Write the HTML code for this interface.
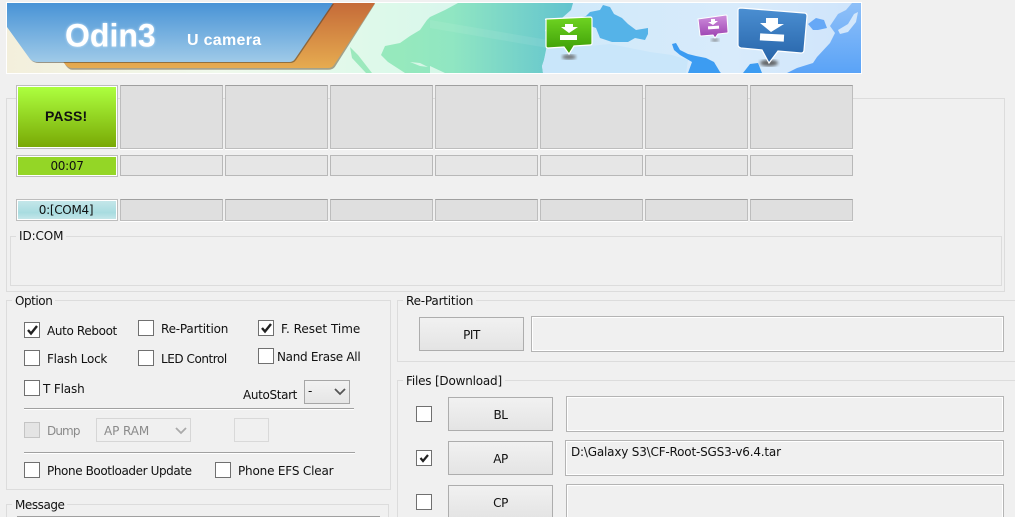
<!DOCTYPE html>
<html><head><meta charset="utf-8"><style>
html,body{margin:0;padding:0;background:#f0f0f0;width:1015px;height:517px;overflow:hidden}
body{position:relative;font:12px/14px "DejaVu Sans","Liberation Sans",sans-serif;color:#111;letter-spacing:-.45px}
div,span{position:absolute;box-sizing:border-box}
.t{white-space:nowrap}
.box{border:1px solid #dcdcdc}
.lab{background:#f0f0f0;padding:0 3px;white-space:nowrap}
.c{background:#dfdfdf;border:1px solid #bdbdbd;border-top:1px solid #9f9f9f;box-shadow:0 1px 0 #fff}
.m{background:#e6e6e6;border:1px solid #b8b8b8}
.cb{width:16px;height:16px;background:#fff;border:1px solid #707070}
.cb svg{position:absolute;left:0;top:0}
.btn{border:1px solid #adadad;background:linear-gradient(#f1f1f1,#e4e4e4);text-align:center}
.f{border:1px solid #b4b4b4;box-shadow:inset 0 0 0 1px #fff;background:#f0f0f0}
.hr{height:1px;background:#a0a0a0;box-shadow:0 1px 0 #fff}
</style></head><body>

<svg style="position:absolute;left:0;top:0" width="1015" height="80" viewBox="0 0 1015 80">
<defs>
<linearGradient id="bg" gradientUnits="userSpaceOnUse" x1="7" x2="861" y1="0" y2="0">
<stop offset="0" stop-color="#f3efdc"/><stop offset=".25" stop-color="#f0f9ec"/><stop offset=".45" stop-color="#dcf9ea"/><stop offset=".58" stop-color="#d8f3ee"/><stop offset=".66" stop-color="#d0e9fa"/><stop offset=".85" stop-color="#d8ebfb"/><stop offset="1" stop-color="#cfe4fb"/>
</linearGradient>
<linearGradient id="blue" x1="0" x2="0" y1="0" y2="1"><stop offset="0" stop-color="#4893d6"/><stop offset="1" stop-color="#9fcae8"/></linearGradient>
<linearGradient id="or" x1="0" x2="0" y1="0" y2="1"><stop offset="0" stop-color="#c56a38"/><stop offset="1" stop-color="#e6ab50"/></linearGradient>
<linearGradient id="sea" gradientUnits="userSpaceOnUse" x1="400" x2="573" y1="0" y2="0"><stop offset="0" stop-color="#96e9bd"/><stop offset=".3" stop-color="#90e6c2"/><stop offset="1" stop-color="#62c3cf"/></linearGradient>
<linearGradient id="gr" x1="0" x2="0" y1="0" y2="1"><stop offset="0" stop-color="#6fd422"/><stop offset="1" stop-color="#3a9a05"/></linearGradient>
<linearGradient id="pu" x1="0" x2="0" y1="0" y2="1"><stop offset="0" stop-color="#cf8fdc"/><stop offset="1" stop-color="#9a3fb0"/></linearGradient>
<linearGradient id="bl" x1="0" x2="0" y1="0" y2="1"><stop offset="0" stop-color="#4b8fd2"/><stop offset="1" stop-color="#2663a8"/></linearGradient>
<linearGradient id="as" gradientUnits="userSpaceOnUse" x1="861" x2="861" y1="3" y2="73"><stop offset="0" stop-color="#8fc0f8"/><stop offset="1" stop-color="#5aa3f7"/></linearGradient>
<filter id="b"><feGaussianBlur stdDeviation="1.5"/></filter>
<filter id="gl"><feGaussianBlur stdDeviation="1.4"/></filter>
</defs>
<rect x="6" y="2" width="856" height="72" fill="#fff"/>
<rect x="7" y="3" width="854" height="70" fill="url(#bg)"/>
<!-- americas + atlantic -->
<path d="M350 47 L358 55 L372 73 L366 73 L352 58Z" fill="#9ce9bd"/>
<path d="M458 3 H573 L571 10 L562 18 L555 25 L545 30 L548 40 L546 50 L544 60 L542 66 L543 73 H405 L388 62 L381 55 L385 46 L400 43 L410 36 L420 30 L427 20 L430 17 L445 10Z" fill="url(#sea)"/>
<path d="M410 62 L420 63 L428 67 L420 66Z" fill="#d6f6e6"/>
<path d="M430 66 L445 73 H430Z" fill="#d7f7e8"/>
<path d="M430 20 L560 42 L560 50 L430 28Z" fill="#fff" opacity=".08"/>
<!-- africa -->
<path d="M543 73 L542 66 L544 60 L547 48 L575 46 L590 46 L610 44 L650 52 L672 55 L688 60 L686 73Z" fill="#c9e6fa"/>
<!-- mediterranean -->
<path d="M578 18 L586 16 L590 12 L600 10 L603 5 L610 7 L614 14 L622 18 L628 24 L636 30 L648 28 L648 34 L645 40 L635 38 L628 42 L612 42 L600 38 L596 28 L588 25 L580 24Z" fill="#55b3e8"/>
<!-- arabia / india -->
<path d="M672 44 L676 43 L680 50 L688 54 L696 56 L706 58 L714 62 L720 72 L721 73 L688 73 L692 62 L680 55 L674 50Z" fill="#3c9cf2"/>
<path d="M743 73 L750 64 L758 63 L762 73Z" fill="#3c9cf2"/>
<!-- east asia -->
<path d="M861 3 V73 H787 L797 68 L813 63 L817 57 L830 43 L835 33 L830 26 L838 14 L846 10 L852 3Z" fill="url(#as)"/>
<path d="M813 30 L808 24 L816 18 L824 20 L827 28 L818 30Z" fill="#66a8f6"/>
<path d="M838 30 L848 24 L854 14 L858 12 L856 22 L848 32 L840 34Z" fill="#d3e7fb"/>
<!-- orange band -->
<path d="M64 62 L333 3 H375 L335 66 Q333 69 328 69 H72 Q68 69 64 62Z" fill="#6e5a3a" opacity=".55" transform="translate(0 .7)"/>
<path d="M60 58 L333 3 H375 L334 65 Q332 68 328 68 H72 Q68 68 65 64Z" fill="url(#or)"/>
<!-- blue band -->
<path d="M7 3 H333 L295 59 Q293 62 289 62 H38 Q33 62 30 59 L7 27Z" fill="#3f3a30" opacity=".5" transform="translate(1 1)"/>
<path d="M7 3 H333 L295 59 Q293 62 289 62 H38 Q33 62 30 59 L7 27Z" fill="url(#blue)"/>
<text x="65" y="46.5" font-family="Liberation Sans" font-weight="bold" font-size="32" fill="#cfe6fa" filter="url(#gl)" letter-spacing="0">Odin3</text>
<text x="65" y="46.5" font-family="Liberation Sans" font-weight="bold" font-size="32" fill="#fff" letter-spacing="0">Odin3</text>
<text x="187" y="45" font-family="Liberation Sans" font-weight="bold" font-size="16" fill="#fff" letter-spacing=".3">U camera</text>
<!-- green pin -->
<ellipse cx="569" cy="57" rx="7" ry="2.5" fill="#666" filter="url(#b)" opacity=".9"/>
<path d="M546 20 Q545 19 546 19 L590 17 Q592 17 592 19 L592 43 Q592 45 590 45 L574 46 L569 54 L564 47 L548 48 Q546 48 546 46Z" fill="url(#gr)" stroke="#fff" stroke-width="1.2"/>
<path d="M565 24 H573 V27 H578 L569 33 L561 27 H565Z" fill="#fff"/><rect x="560" y="35" width="17" height="5" fill="#fff"/>
<!-- purple pin -->
<ellipse cx="715" cy="40" rx="4" ry="1.6" fill="#666" filter="url(#b)" opacity=".8"/>
<path d="M698 19 L726 15 Q727 15 727 16 L728 32 Q728 33 727 33 L718 34 L715 38 L713 35 L701 36 Q700 36 700 35Z" fill="url(#pu)" stroke="#fff"/>
<path d="M711 19 H715 V21 H718 L713 25 L708 22 H711Z" fill="#fff"/><rect x="708" y="26" width="11" height="3" fill="#fff" transform="rotate(-4 713 27)"/>
<!-- blue pin -->
<ellipse cx="769" cy="63" rx="9" ry="3.2" fill="#555" filter="url(#b)" opacity=".9"/>
<path d="M741 8 L804 13 Q807 13 807 16 L804 50 Q804 53 801 53 L778 51 L769 63 L762 50 L741 48 Q738 47 738 45 L738 10 Q738 8 741 8Z" fill="url(#bl)" stroke="#fff" stroke-width="1.2"/>
<path d="M766 18 H778 V24 H784 L771 32 L760 23 H766Z" fill="#fff"/><rect x="760" y="34" width="24" height="7" fill="#fff" transform="rotate(3 772 37)"/>
</svg>

<div class="box" style="left:6px;top:98px;width:999px;height:194px"></div>

<div style="left:16px;top:85px;width:102px;height:64px;background:linear-gradient(#adff3f,#79a905);border:2px solid #fff;outline:1px solid #bdbdbd;outline-offset:-1px"></div>
<div class="t" style="left:45px;top:108px;font:bold 14px/16px 'Liberation Sans',sans-serif;letter-spacing:.1px">PASS!</div>
<div class="c" style="left:120px;top:85px;width:103px;height:64px"></div>
<div class="c" style="left:225px;top:85px;width:103px;height:64px"></div>
<div class="c" style="left:330px;top:85px;width:103px;height:64px"></div>
<div class="c" style="left:435px;top:85px;width:103px;height:64px"></div>
<div class="c" style="left:540px;top:85px;width:103px;height:64px"></div>
<div class="c" style="left:645px;top:85px;width:103px;height:64px"></div>
<div class="c" style="left:750px;top:85px;width:103px;height:64px"></div>

<div style="left:16px;top:155px;width:102px;height:22px;background:#94d626;border:2px solid #fff;outline:1px solid #bdbdbd;outline-offset:-1px;text-align:center;line-height:19px;letter-spacing:-.3px">00:07</div>
<div class="m" style="left:120px;top:155px;width:103px;height:21px"></div>
<div class="m" style="left:225px;top:155px;width:103px;height:21px"></div>
<div class="m" style="left:330px;top:155px;width:103px;height:21px"></div>
<div class="m" style="left:435px;top:155px;width:103px;height:21px"></div>
<div class="m" style="left:540px;top:155px;width:103px;height:21px"></div>
<div class="m" style="left:645px;top:155px;width:103px;height:21px"></div>
<div class="m" style="left:750px;top:155px;width:103px;height:21px"></div>

<div style="left:16px;top:199px;width:102px;height:22px;background:linear-gradient(#c4e6e9,#a8dce0 65%,#c4e6e9);border:2px solid #fff;outline:1px solid #bdbdbd;outline-offset:-1px;text-align:center;line-height:18px;letter-spacing:-.3px;padding-right:2px">0:[COM4]</div>
<div class="c" style="left:120px;top:199px;width:103px;height:22px"></div>
<div class="c" style="left:225px;top:199px;width:103px;height:22px"></div>
<div class="c" style="left:330px;top:199px;width:103px;height:22px"></div>
<div class="c" style="left:435px;top:199px;width:103px;height:22px"></div>
<div class="c" style="left:540px;top:199px;width:103px;height:22px"></div>
<div class="c" style="left:645px;top:199px;width:103px;height:22px"></div>
<div class="c" style="left:750px;top:199px;width:103px;height:22px"></div>

<div class="box" style="left:10px;top:236px;width:992px;height:50px"></div>
<div class="lab" style="left:16px;top:229px;letter-spacing:-.1px">ID:COM</div>

<!-- option -->
<div class="box" style="left:6px;top:300px;width:385px;height:190px"></div>
<div class="lab" style="left:12px;top:294px">Option</div>

<div class="cb" style="left:24px;top:322px"><svg width="14" height="14"><path d="M3 7 L6 10.5 L12 3" fill="none" stroke="#222" stroke-width="2.4"/></svg></div>
<div class="t" style="left:47px;top:324px;letter-spacing:-.36px">Auto Reboot</div>
<div class="cb" style="left:138px;top:320px"></div>
<div class="t" style="left:161px;top:322px;letter-spacing:-.2px">Re-Partition</div>
<div class="cb" style="left:258px;top:320px"><svg width="14" height="14"><path d="M3 7 L6 10.5 L12 3" fill="none" stroke="#222" stroke-width="2.4"/></svg></div>
<div class="t" style="left:281px;top:322px;letter-spacing:0">F. Reset Time</div>

<div class="cb" style="left:24px;top:350px"></div>
<div class="t" style="left:47px;top:352px;letter-spacing:-.25px">Flash Lock</div>
<div class="cb" style="left:138px;top:350px"></div>
<div class="t" style="left:161px;top:352px">LED Control</div>
<div class="cb" style="left:258px;top:348px"></div>
<div class="t" style="left:277px;top:350px;letter-spacing:-.3px">Nand Erase All</div>

<div class="cb" style="left:24px;top:380px"></div>
<div class="t" style="left:43px;top:382px;letter-spacing:-.15px">T Flash</div>
<div class="t" style="left:243px;top:388px;letter-spacing:-.35px">AutoStart</div>
<div style="left:304px;top:380px;width:46px;height:24px;border:1px solid #a6a6a6;background:linear-gradient(#f2f2f2,#e5e5e5)"></div>
<div class="t" style="left:308px;top:384px">-</div>
<svg style="position:absolute;left:334px;top:388px" width="12" height="8"><path d="M1 1 L6 6 L11 1" fill="none" stroke="#555" stroke-width="1.8"/></svg>
<div class="hr" style="left:24px;top:408px;width:330px"></div>

<div class="cb" style="left:24px;top:422px;background:#e4e4e4;border-color:#c4c4c4"></div>
<div class="t" style="left:47px;top:424px;color:#8a8a8a;letter-spacing:-.9px">Dump</div>
<div style="left:96px;top:418px;width:95px;height:24px;border:1px solid #d6d6d6"></div>
<div class="t" style="left:104px;top:424px;color:#8a8a8a;letter-spacing:-.1px">AP RAM</div>
<svg style="position:absolute;left:175px;top:427px" width="12" height="8"><path d="M1 1 L6 6 L11 1" fill="none" stroke="#aaa" stroke-width="1.8"/></svg>
<div style="left:234px;top:418px;width:35px;height:24px;border:1px solid #d9d9d9;background:#f0f0f0"></div>
<div class="hr" style="left:24px;top:452px;width:331px"></div>

<div class="cb" style="left:24px;top:462px"></div>
<div class="t" style="left:47px;top:464px;letter-spacing:-.4px">Phone Bootloader Update</div>
<div class="cb" style="left:215px;top:462px"></div>
<div class="t" style="left:238px;top:464px;letter-spacing:-.18px">Phone EFS Clear</div>

<!-- message -->
<div class="box" style="left:6px;top:504px;width:383px;height:30px"></div>
<div class="lab" style="left:12px;top:498px">Message</div>
<div style="left:17px;top:516px;width:363px;height:1px;background:#a0a0a0"></div>

<!-- right -->
<div class="box" style="left:397px;top:300px;width:640px;height:62px"></div>
<div class="lab" style="left:403px;top:294px;letter-spacing:-.2px">Re-Partition</div>
<div class="btn" style="left:419px;top:317px;width:105px;height:34px;line-height:34px">PIT</div>
<div class="f" style="left:531px;top:316px;width:473px;height:36px"></div>

<div class="box" style="left:397px;top:380px;width:640px;height:160px"></div>
<div class="lab" style="left:403px;top:374px;letter-spacing:-.2px">Files [Download]</div>

<div class="cb" style="left:416px;top:406px"></div>
<div class="btn" style="left:448px;top:397px;width:105px;height:34px;line-height:34px">BL</div>
<div class="f" style="left:566px;top:396px;width:438px;height:36px"></div>

<div class="cb" style="left:416px;top:450px"><svg width="14" height="14"><path d="M3.5 7 L6 10 L11 4" fill="none" stroke="#222" stroke-width="2.2"/></svg></div>
<div class="btn" style="left:448px;top:441px;width:105px;height:34px;line-height:34px">AP</div>
<div class="f" style="left:565px;top:440px;width:439px;height:36px"></div>
<div class="t" style="left:571px;top:445px;letter-spacing:-.19px">D:\Galaxy S3\CF-Root-SGS3-v6.4.tar</div>

<div class="cb" style="left:416px;top:494px"></div>
<div class="btn" style="left:448px;top:485px;width:105px;height:34px;line-height:34px">CP</div>
<div class="f" style="left:566px;top:484px;width:438px;height:36px"></div>
</body></html>
